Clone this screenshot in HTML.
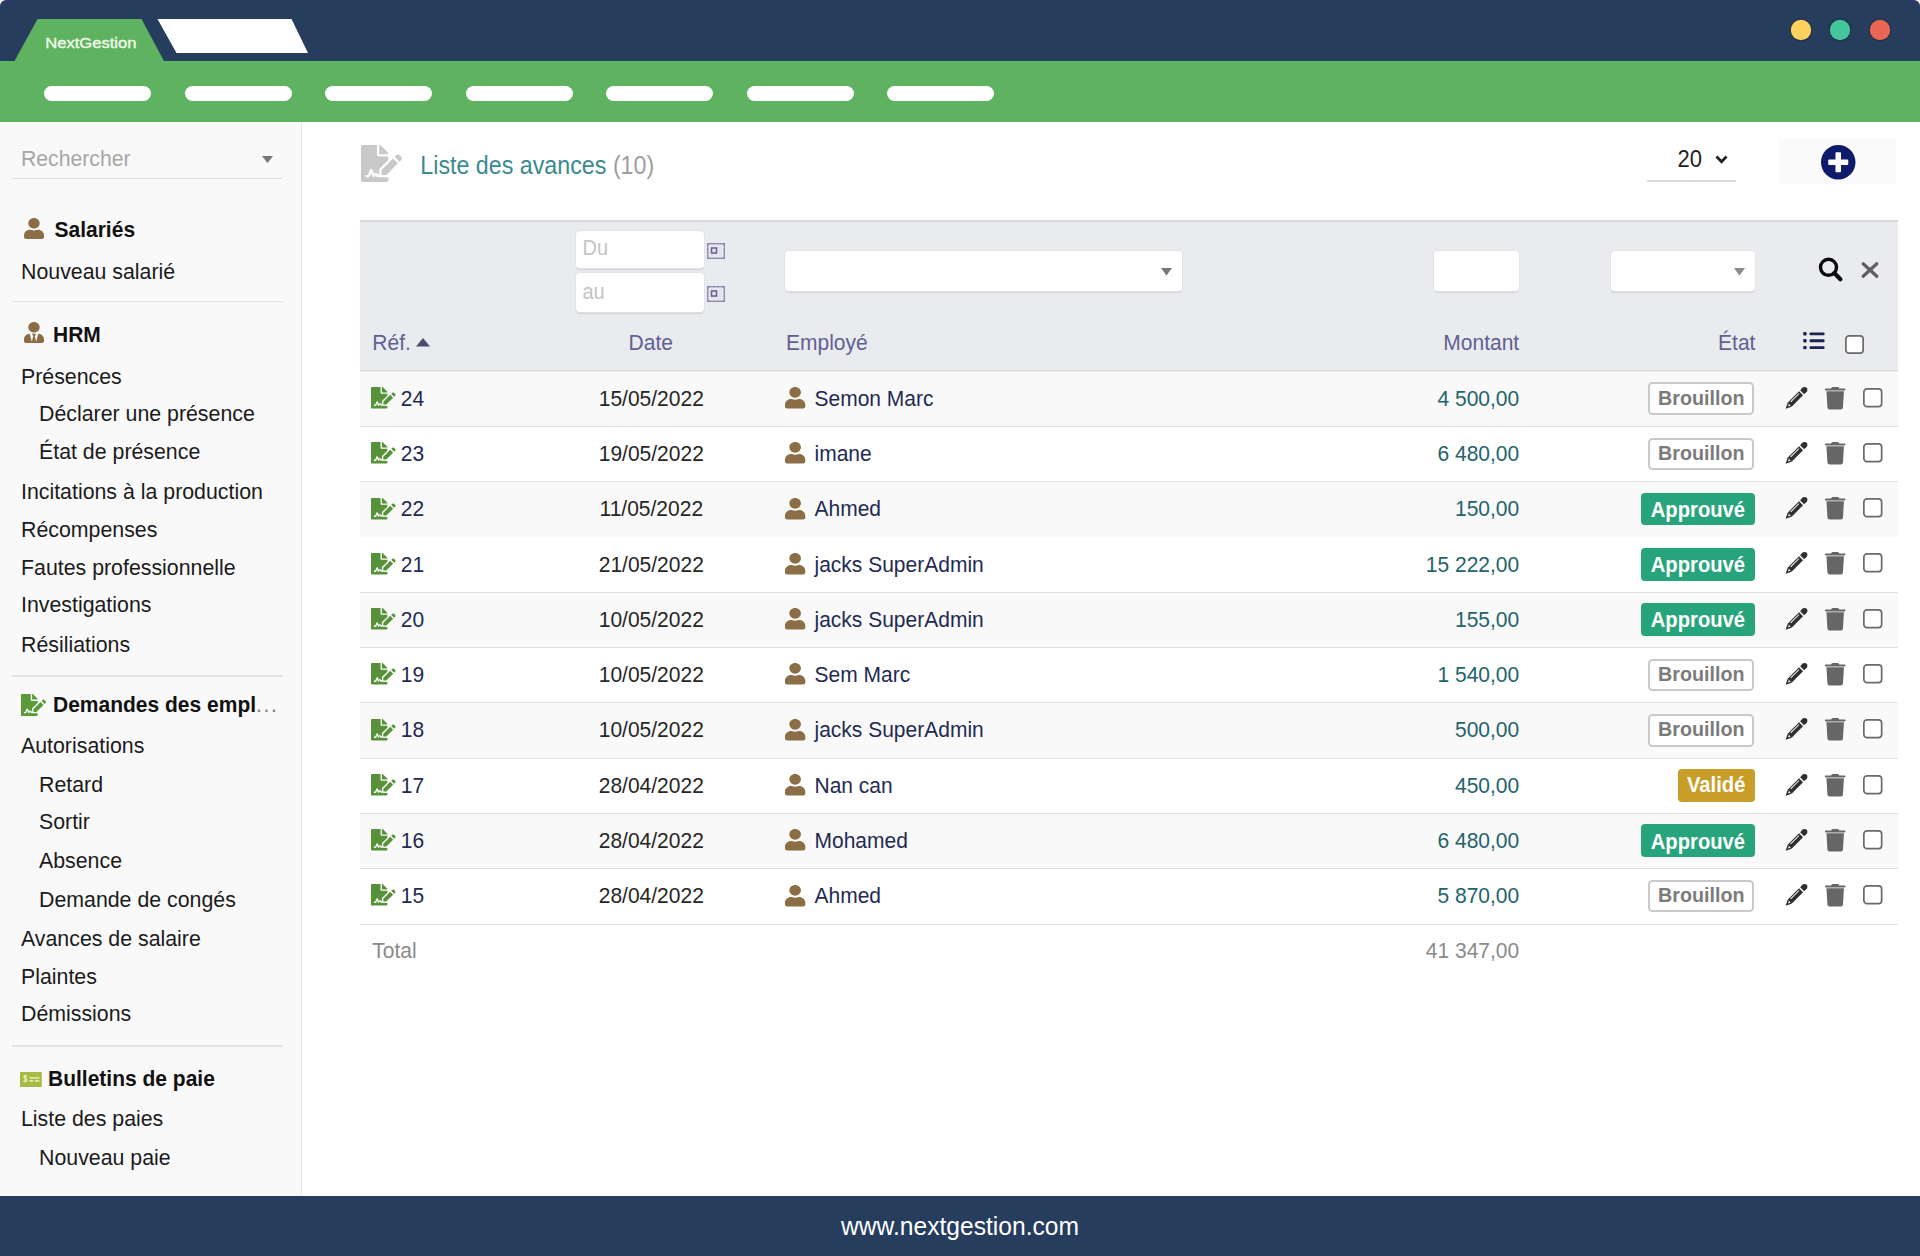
<!DOCTYPE html><html><head><meta charset="utf-8"><style>html,body{margin:0;padding:0;}
body{width:1920px;height:1256px;position:relative;overflow:hidden;background:#fff;font-family:"Liberation Sans", sans-serif;}
.t{position:absolute;white-space:nowrap;}
.i{position:absolute;overflow:visible;}
.b{position:absolute;}
.cb{position:absolute;border:2px solid #6e6e6e;border-radius:3.5px;background:#fff;}
</style></head><body>
<div class="b" style="left:0;top:0;width:1920px;height:62px;background:#263d5e;border-radius:6px 6px 0 0"></div><div class="b" style="left:0;top:61px;width:1920px;height:61px;background:#5fb260"></div><svg class="i" style="left:0;top:0;width:320px;height:62px" viewBox="0 0 320 62"><path d="M14 62 L37.5 19 H141.5 L164.5 62 Z" fill="#5fb260"/><path d="M157.5 19 H291.5 L308 53 H176.5 Z" fill="#ffffff"/></svg><div class="t" style="left:45.2px;top:34.55px;font-size:16.6px;line-height:16.6px;color:#effde9;font-weight:normal;-webkit-text-stroke:0.4px #effde9;transform:scaleY(0.92);transform-origin:0 14.05px;">NextGestion</div>
<svg class="i" style="left:1789px;top:18px;width:24px;height:24px" viewBox="0 0 24 24"><circle cx="12" cy="12" r="11.2" fill="#1b2a3f" fill-opacity="0.7"/><circle cx="12" cy="12" r="10.2" fill="#fdd15d"/></svg><svg class="i" style="left:1828px;top:18px;width:24px;height:24px" viewBox="0 0 24 24"><circle cx="12" cy="12" r="11.2" fill="#1b2a3f" fill-opacity="0.7"/><circle cx="12" cy="12" r="10.2" fill="#45c59a"/></svg><svg class="i" style="left:1868px;top:18px;width:24px;height:24px" viewBox="0 0 24 24"><circle cx="12" cy="12" r="11.2" fill="#1b2a3f" fill-opacity="0.7"/><circle cx="12" cy="12" r="10.2" fill="#ea6652"/></svg><div class="b" style="left:44.0px;top:86px;width:107px;height:15px;border-radius:8px;background:#fff"></div><div class="b" style="left:184.5px;top:86px;width:107px;height:15px;border-radius:8px;background:#fff"></div><div class="b" style="left:325.0px;top:86px;width:107px;height:15px;border-radius:8px;background:#fff"></div><div class="b" style="left:465.5px;top:86px;width:107px;height:15px;border-radius:8px;background:#fff"></div><div class="b" style="left:606.0px;top:86px;width:107px;height:15px;border-radius:8px;background:#fff"></div><div class="b" style="left:746.5px;top:86px;width:107px;height:15px;border-radius:8px;background:#fff"></div><div class="b" style="left:887.0px;top:86px;width:107px;height:15px;border-radius:8px;background:#fff"></div><div class="b" style="left:0;top:122px;width:301px;height:1074px;background:#f9f9f9;border-right:1.5px solid #e6e6e6"></div><div class="t" style="left:21px;top:147.55px;font-size:21.2px;line-height:21.2px;color:#a6a6a6;font-weight:normal;transform:scaleY(1.07);transform-origin:0 17.95px;">Rechercher</div>
<svg class="i" style="left:262px;top:156px;width:11px;height:7px" viewBox="0 0 11 7"><path d="M0 0 H11 L5.5 7 Z" fill="#777"/></svg><div class="b" style="left:12px;top:177.5px;width:270px;height:1.5px;background:#dcdcdc"></div><svg class="i" style="left:24px;top:218px;width:20px;height:21px" viewBox="0 0 448 512" preserveAspectRatio="none"><path d="M224 256c70.7 0 128-57.3 128-128S294.7 0 224 0 96 57.3 96 128s57.3 128 128 128zm89.6 32h-16.7c-22.2 10.2-46.9 16-72.9 16s-50.6-5.8-72.9-16h-16.7C60.2 288 0 348.2 0 422.4V464c0 26.5 21.5 48 48 48h352c26.5 0 48-21.5 48-48v-41.6c0-74.2-60.2-134.4-134.4-134.4z" fill="#8b6e45"/></svg><div class="t" style="left:54.5px;top:219.22px;font-size:21px;line-height:21px;color:#111;font-weight:bold;transform:scaleY(1.07);transform-origin:0 17.78px;">Salariés</div>
<div class="t" style="left:21px;top:261.64px;font-size:21.33px;line-height:21.33px;color:#1b1b1b;font-weight:normal;transform:scaleY(1.07);transform-origin:0 18.06px;">Nouveau salarié</div>
<div class="b" style="left:12px;top:300.5px;width:271px;height:1.5px;background:#e2e2e2"></div><svg class="i" style="left:24px;top:322px;width:20px;height:21px" viewBox="0 0 448 512" preserveAspectRatio="none"><path d="M224 256c70.7 0 128-57.3 128-128S294.7 0 224 0 96 57.3 96 128s57.3 128 128 128zm95.8 32.6L272 480l-32-136 32-56h-96l32 56-32 136-47.8-191.4C56.9 292 0 350.3 0 422.4V464c0 26.5 21.5 48 48 48h352c26.5 0 48-21.5 48-48v-41.6c0-72.1-56.9-130.4-128.2-133.8z" fill="#8b6e45"/></svg><div class="t" style="left:53px;top:323.62px;font-size:21px;line-height:21px;color:#111;font-weight:bold;transform:scaleY(1.07);transform-origin:0 17.78px;">HRM</div>
<div class="t" style="left:21px;top:366.64px;font-size:21.33px;line-height:21.33px;color:#1b1b1b;font-weight:normal;transform:scaleY(1.07);transform-origin:0 18.06px;">Présences</div>
<div class="t" style="left:39px;top:404.24px;font-size:21.33px;line-height:21.33px;color:#1b1b1b;font-weight:normal;transform:scaleY(1.07);transform-origin:0 18.06px;">Déclarer une présence</div>
<div class="t" style="left:39px;top:442.44px;font-size:21.33px;line-height:21.33px;color:#1b1b1b;font-weight:normal;transform:scaleY(1.07);transform-origin:0 18.06px;">État de présence</div>
<div class="t" style="left:21px;top:482.24px;font-size:21.33px;line-height:21.33px;color:#1b1b1b;font-weight:normal;transform:scaleY(1.07);transform-origin:0 18.06px;">Incitations à la production</div>
<div class="t" style="left:21px;top:519.54px;font-size:21.33px;line-height:21.33px;color:#1b1b1b;font-weight:normal;transform:scaleY(1.07);transform-origin:0 18.06px;">Récompenses</div>
<div class="t" style="left:21px;top:557.74px;font-size:21.33px;line-height:21.33px;color:#1b1b1b;font-weight:normal;transform:scaleY(1.07);transform-origin:0 18.06px;">Fautes professionnelle</div>
<div class="t" style="left:21px;top:595.24px;font-size:21.33px;line-height:21.33px;color:#1b1b1b;font-weight:normal;transform:scaleY(1.07);transform-origin:0 18.06px;">Investigations</div>
<div class="t" style="left:21px;top:634.54px;font-size:21.33px;line-height:21.33px;color:#1b1b1b;font-weight:normal;transform:scaleY(1.07);transform-origin:0 18.06px;">Résiliations</div>
<div class="b" style="left:12px;top:675px;width:271px;height:1.5px;background:#e2e2e2"></div><svg class="i" style="left:21px;top:694px;width:25px;height:22px" viewBox="0 0 576 512" preserveAspectRatio="none"><path d="M218.17 424.14c-2.95-5.92-8.09-6.52-10.17-6.52s-7.22.59-10.020 6.19l-7.67 15.34c-6.37 12.78-25.03 11.37-29.48-2.09L144 386.59l-10.61 31.88c-5.89 17.66-22.380 29.53-41 29.53H80c-8.84 0-16-7.16-16-16s7.16-16 16-16h12.39c4.83 0 9.11-3.08 10.64-7.66l18.19-54.64c3.3-9.81 12.44-16.41 22.78-16.41s19.48 6.59 22.77 16.41l13.88 41.64c19.75-16.19 54.06-9.7 66 14.16 1.89 3.78 5.49 5.95 9.36 6.26v-82.12l128-127.09V160H248c-13.2 0-24-10.8-24-24V0H24C10.7 0 0 10.7 0 24v464c0 13.3 10.7 24 24 24h336c13.3 0 24-10.7 24-24v-40l-128-.53c-24.17-.12-45.92-13.79-57.83-37.33zM384 121.9c0-6.3-2.5-12.4-7-16.9L279.1 7c-4.5-4.5-10.6-7-17-7H256v128h128v-6.1zm-96 225.06V416h68.99l161.68-162.78-67.88-67.88L288 346.96zm280.54-179.63l-31.87-31.87c-9.94-9.94-26.07-9.94-36.01 0l-27.25 27.25 67.88 67.88 27.25-27.25c9.95-9.94 9.95-26.07 0-36.01z" fill="#5b9a3a"/></svg><div class="t" style="left:53px;top:694.02px;font-size:21px;line-height:21px;color:#111;font-weight:bold;transform:scaleY(1.07);transform-origin:0 17.78px;">Demandes des empl<span style="letter-spacing:1.6px;color:#7d7d7d;font-weight:normal">...</span></div>
<div class="t" style="left:21px;top:735.84px;font-size:21.33px;line-height:21.33px;color:#1b1b1b;font-weight:normal;transform:scaleY(1.07);transform-origin:0 18.06px;">Autorisations</div>
<div class="t" style="left:39px;top:775.24px;font-size:21.33px;line-height:21.33px;color:#1b1b1b;font-weight:normal;transform:scaleY(1.07);transform-origin:0 18.06px;">Retard</div>
<div class="t" style="left:39px;top:812.24px;font-size:21.33px;line-height:21.33px;color:#1b1b1b;font-weight:normal;transform:scaleY(1.07);transform-origin:0 18.06px;">Sortir</div>
<div class="t" style="left:39px;top:851.24px;font-size:21.33px;line-height:21.33px;color:#1b1b1b;font-weight:normal;transform:scaleY(1.07);transform-origin:0 18.06px;">Absence</div>
<div class="t" style="left:39px;top:890.14px;font-size:21.33px;line-height:21.33px;color:#1b1b1b;font-weight:normal;transform:scaleY(1.07);transform-origin:0 18.06px;">Demande de congés</div>
<div class="t" style="left:21px;top:928.54px;font-size:21.33px;line-height:21.33px;color:#1b1b1b;font-weight:normal;transform:scaleY(1.07);transform-origin:0 18.06px;">Avances de salaire</div>
<div class="t" style="left:21px;top:966.64px;font-size:21.33px;line-height:21.33px;color:#1b1b1b;font-weight:normal;transform:scaleY(1.07);transform-origin:0 18.06px;">Plaintes</div>
<div class="t" style="left:21px;top:1004.24px;font-size:21.33px;line-height:21.33px;color:#1b1b1b;font-weight:normal;transform:scaleY(1.07);transform-origin:0 18.06px;">Démissions</div>
<div class="b" style="left:12px;top:1045px;width:271px;height:1.5px;background:#e2e2e2"></div><svg class="i" style="left:20.2px;top:1071.8px;width:21.8px;height:15.2px" viewBox="0 0 22 15.2"><rect x="0" y="0" width="22" height="15.2" rx="0.6" fill="#a8ba45"/><path d="M7 4.6 Q6.5 3.7 5.3 3.7 Q3.9 3.7 3.9 5 Q3.9 6.1 5.4 6.5 Q6.9 6.9 6.9 8.1 Q6.9 9.5 5.3 9.5 Q4.1 9.5 3.6 8.6 M5.35 2.6 V10.6" stroke="#e4ecb0" stroke-width="1.3" fill="none"/><path d="M9.6 5.9 H19.6" stroke="#e6eda6" stroke-width="1.6"/><path d="M9.6 8.9 H13.4 M15.2 8.9 H19.6" stroke="#e6eda6" stroke-width="1.6"/></svg><div class="t" style="left:48px;top:1067.62px;font-size:21px;line-height:21px;color:#111;font-weight:bold;transform:scaleY(1.07);transform-origin:0 17.78px;">Bulletins de paie</div>
<div class="t" style="left:21px;top:1108.64px;font-size:21.33px;line-height:21.33px;color:#1b1b1b;font-weight:normal;transform:scaleY(1.07);transform-origin:0 18.06px;">Liste des paies</div>
<div class="t" style="left:39px;top:1148.24px;font-size:21.33px;line-height:21.33px;color:#1b1b1b;font-weight:normal;transform:scaleY(1.07);transform-origin:0 18.06px;">Nouveau paie</div>
<div class="b" style="left:0;top:1196px;width:1920px;height:60px;background:#263d5e"></div><div class="t" style="left:660px;width:600px;top:1214.68px;font-size:24.6px;line-height:24.6px;color:#fff;font-weight:normal;text-align:center;transform:scaleY(1.07);transform-origin:0 20.82px;">www.nextgestion.com</div>
<svg class="i" style="left:361px;top:145px;width:41px;height:37px" viewBox="0 0 576 512" preserveAspectRatio="none"><path d="M218.17 424.14c-2.95-5.92-8.09-6.52-10.17-6.52s-7.22.59-10.020 6.19l-7.67 15.34c-6.37 12.78-25.03 11.37-29.48-2.09L144 386.59l-10.61 31.88c-5.89 17.66-22.380 29.53-41 29.53H80c-8.84 0-16-7.16-16-16s7.16-16 16-16h12.39c4.83 0 9.11-3.08 10.64-7.66l18.19-54.64c3.3-9.81 12.44-16.41 22.78-16.41s19.48 6.59 22.77 16.41l13.88 41.64c19.75-16.19 54.06-9.7 66 14.16 1.89 3.78 5.49 5.95 9.36 6.26v-82.12l128-127.09V160H248c-13.2 0-24-10.8-24-24V0H24C10.7 0 0 10.7 0 24v464c0 13.3 10.7 24 24 24h336c13.3 0 24-10.7 24-24v-40l-128-.53c-24.17-.12-45.92-13.79-57.83-37.33zM384 121.9c0-6.3-2.5-12.4-7-16.9L279.1 7c-4.5-4.5-10.6-7-17-7H256v128h128v-6.1zm-96 225.06V416h68.99l161.68-162.78-67.88-67.88L288 346.96zm280.54-179.63l-31.87-31.87c-9.94-9.94-26.07-9.94-36.01 0l-27.25 27.25 67.88 67.88 27.25-27.25c9.95-9.94 9.95-26.07 0-36.01z" fill="#c9c9c9"/></svg><div class="t" style="left:420.3px;top:154.92px;font-size:23.25px;line-height:23.25px;color:#3a8a90;font-weight:normal;transform:scaleY(1.07);transform-origin:0 19.68px;">Liste des avances <span style="color:#9d9d9d">(10)</span></div>
<div class="t" style="left:1677.6px;top:148.78px;font-size:22px;line-height:22px;color:#222;font-weight:normal;transform:scaleY(1.07);transform-origin:0 18.62px;">20</div>
<svg class="i" style="left:1715px;top:154.5px;width:13px;height:9px" viewBox="0 0 13 9"><path d="M1.5 1.5 L6.5 6.8 L11.5 1.5" stroke="#222" stroke-width="2.8" fill="none"/></svg><div class="b" style="left:1646.5px;top:180.3px;width:89px;height:2px;background:#dcdcdc"></div><div class="b" style="left:1779px;top:139px;width:117px;height:45px;background:#fafafa"></div><svg class="i" style="left:1820.5px;top:144.8px;width:34.5px;height:34.5px" viewBox="8 8 496 496"><circle cx="256" cy="256" r="200" fill="#fff"/><path d="M256 8C119 8 8 119 8 256s111 248 248 248 248-111 248-248S393 8 256 8zm144 276c0 6.6-5.4 12-12 12h-92v92c0 6.6-5.4 12-12 12h-56c-6.6 0-12-5.4-12-12v-92h-92c-6.6 0-12-5.4-12-12v-56c0-6.6 5.4-12 12-12h92v-92c0-6.6 5.4-12 12-12h56c6.6 0 12 5.4 12 12v92h92c6.6 0 12 5.4 12 12v56z" fill="#0e1b6b"/></svg><div class="b" style="left:360px;top:220px;width:1538px;height:150.5px;background:#e9ebee;border-top:2.4px solid #d6d7da"></div><div class="b" style="left:576px;top:230.7px;width:127.70000000000005px;height:37.80000000000001px;background:#fff;border-radius:4px;box-shadow:0 0 0 0.8px #e1e2e6, 0 1.2px 1.2px rgba(0,0,0,0.10)"></div><div class="b" style="left:576px;top:273.3px;width:127.70000000000005px;height:38.39999999999998px;background:#fff;border-radius:4px;box-shadow:0 0 0 0.8px #e1e2e6, 0 1.2px 1.2px rgba(0,0,0,0.10)"></div><div class="t" style="left:582.5px;top:238.47px;font-size:20px;line-height:20px;color:#c4c4c4;font-weight:normal;transform:scaleY(1.07);transform-origin:0 16.93px;">Du</div>
<div class="t" style="left:582.5px;top:282.47px;font-size:20px;line-height:20px;color:#c4c4c4;font-weight:normal;transform:scaleY(1.07);transform-origin:0 16.93px;">au</div>
<svg class="i" style="left:706.5px;top:242.5px;width:18px;height:16px" viewBox="0 0 18 16"><rect x="0.75" y="0.75" width="16.5" height="14.5" fill="none" stroke="#8a86ac" stroke-width="1.5"/><path d="M0.75 4.5 H17.25 M0.75 8 H17.25 M0.75 11.5 H17.25 M5 0.75 V15.25 M9 0.75 V15.25 M13 0.75 V15.25" stroke="#e2dcef" stroke-width="0.9"/><rect x="4.5" y="5" width="5" height="5" fill="none" stroke="#6a6390" stroke-width="1.6"/></svg><svg class="i" style="left:706.5px;top:286.0px;width:18px;height:16px" viewBox="0 0 18 16"><rect x="0.75" y="0.75" width="16.5" height="14.5" fill="none" stroke="#8a86ac" stroke-width="1.5"/><path d="M0.75 4.5 H17.25 M0.75 8 H17.25 M0.75 11.5 H17.25 M5 0.75 V15.25 M9 0.75 V15.25 M13 0.75 V15.25" stroke="#e2dcef" stroke-width="0.9"/><rect x="4.5" y="5" width="5" height="5" fill="none" stroke="#6a6390" stroke-width="1.6"/></svg><div class="b" style="left:784.7px;top:250.8px;width:397.70000000000005px;height:40.30000000000001px;background:#fff;border-radius:4px;box-shadow:0 0 0 0.8px #e1e2e6, 0 1.2px 1.2px rgba(0,0,0,0.10)"></div><svg class="i" style="left:1161px;top:268.2px;width:11px;height:7.5px" viewBox="0 0 11 7.5"><path d="M0 0 H11 L5.5 7.5 Z" fill="#777"/></svg><div class="b" style="left:1433.9px;top:251.4px;width:85.29999999999995px;height:39.20000000000002px;background:#fff;border-radius:4px;box-shadow:0 0 0 0.8px #e1e2e6, 0 1.2px 1.2px rgba(0,0,0,0.10)"></div><div class="b" style="left:1610.7px;top:251.4px;width:144.0999999999999px;height:39.20000000000002px;background:#fff;border-radius:4px;box-shadow:0 0 0 0.8px #e1e2e6, 0 1.2px 1.2px rgba(0,0,0,0.10)"></div><svg class="i" style="left:1733.7px;top:268.0px;width:11px;height:7.5px" viewBox="0 0 11 7.5"><path d="M0 0 H11 L5.5 7.5 Z" fill="#8a8a8a"/></svg><svg class="i" style="left:1816px;top:255px;width:30px;height:30px" viewBox="0 0 30 30"><circle cx="12.5" cy="12.3" r="8.0" fill="none" stroke="#0a0a0a" stroke-width="3.4"/><path d="M18.3 18.1 L24.4 24.2" stroke="#0a0a0a" stroke-width="4.2" stroke-linecap="round"/></svg><svg class="i" style="left:1860.5px;top:262px;width:18px;height:16px" viewBox="0 0 18 16"><path d="M2.2 1.8 L15.8 14.2 M15.8 1.8 L2.2 14.2" stroke="#5e5e5e" stroke-width="3.2" stroke-linecap="round"/></svg><div class="t" style="left:372.3px;top:332.22px;font-size:21px;line-height:21px;color:#5e6192;font-weight:normal;transform:scaleY(1.07);transform-origin:0 17.78px;">Réf.</div>
<svg class="i" style="left:416px;top:338px;width:14px;height:8.5px" viewBox="0 0 14 8.5"><path d="M0 8.5 H14 L7 0 Z" fill="#4a4d6e"/></svg><div class="t" style="left:350.79999999999995px;width:600px;top:332.22px;font-size:21px;line-height:21px;color:#5e6192;font-weight:normal;text-align:center;transform:scaleY(1.07);transform-origin:0 17.78px;">Date</div>
<div class="t" style="left:786px;top:332.22px;font-size:21px;line-height:21px;color:#5e6192;font-weight:normal;transform:scaleY(1.07);transform-origin:0 17.78px;">Employé</div>
<div class="t" style="right:400.79999999999995px;top:332.42px;font-size:21px;line-height:21px;color:#5e6192;font-weight:normal;text-align:right;transform:scaleY(1.07);transform-origin:0 17.78px;">Montant</div>
<div class="t" style="right:164.5999999999999px;top:332.42px;font-size:21px;line-height:21px;color:#5e6192;font-weight:normal;text-align:right;transform:scaleY(1.07);transform-origin:0 17.78px;">État</div>
<svg class="i" style="left:1802.7px;top:332.3px;width:22px;height:17.5px" viewBox="0 0 22 17.5"><rect x="0.2" y="0.1" width="3.4" height="3.4" rx="1" fill="#1d2250"/><rect x="0.2" y="7.0" width="3.4" height="3.4" rx="1" fill="#1d2250"/><rect x="0.2" y="13.9" width="3.4" height="3.4" rx="1" fill="#1d2250"/><rect x="6.6" y="0.4" width="14.9" height="2.9" rx="0.8" fill="#1d2250"/><rect x="6.6" y="7.3" width="14.9" height="2.9" rx="0.8" fill="#1d2250"/><rect x="6.6" y="14.2" width="14.9" height="2.9" rx="0.8" fill="#1d2250"/></svg><svg class="i" style="left:1845px;top:335.3px;width:19px;height:19px" viewBox="0 0 19 19"><rect x="0.85" y="0.85" width="17.3" height="17.3" rx="3.2" fill="#fff" stroke="#6a6a6a" stroke-width="1.7"/></svg><div class="b" style="left:360px;top:369.5px;width:1538px;height:1.6px;background:#dadada"></div><div class="b" style="left:360px;top:371.63px;width:1538px;height:55.27px;background:#f9f9f9;"></div><div class="b" style="left:360px;top:426.10px;width:1538px;height:1.6px;background:#e1e1e1"></div><svg class="i" style="left:371px;top:387.03px;width:24.6px;height:21.6px" viewBox="0 0 576 512" preserveAspectRatio="none"><path d="M218.17 424.14c-2.95-5.92-8.09-6.52-10.17-6.52s-7.22.59-10.020 6.19l-7.67 15.34c-6.37 12.78-25.03 11.37-29.48-2.09L144 386.59l-10.61 31.88c-5.89 17.66-22.380 29.53-41 29.53H80c-8.84 0-16-7.16-16-16s7.16-16 16-16h12.39c4.83 0 9.11-3.08 10.64-7.66l18.19-54.64c3.3-9.81 12.44-16.41 22.78-16.41s19.48 6.59 22.77 16.41l13.88 41.64c19.75-16.19 54.06-9.7 66 14.16 1.89 3.78 5.49 5.95 9.36 6.26v-82.12l128-127.09V160H248c-13.2 0-24-10.8-24-24V0H24C10.7 0 0 10.7 0 24v464c0 13.3 10.7 24 24 24h336c13.3 0 24-10.7 24-24v-40l-128-.53c-24.17-.12-45.92-13.79-57.83-37.33zM384 121.9c0-6.3-2.5-12.4-7-16.9L279.1 7c-4.5-4.5-10.6-7-17-7H256v128h128v-6.1zm-96 225.06V416h68.99l161.68-162.78-67.88-67.88L288 346.96zm280.54-179.63l-31.87-31.87c-9.94-9.94-26.07-9.94-36.01 0l-27.25 27.25 67.88 67.88 27.25-27.25c9.95-9.94 9.95-26.07 0-36.01z" fill="#57923a"/></svg><div class="t" style="left:400.8px;top:387.72px;font-size:21px;line-height:21px;color:#1e2a52;font-weight:normal;transform:scaleY(1.07);transform-origin:0 17.78px;">24</div>
<div class="t" style="left:351.29999999999995px;width:600px;top:387.72px;font-size:21px;line-height:21px;color:#262626;font-weight:normal;text-align:center;transform:scaleY(1.07);transform-origin:0 17.78px;">15/05/2022</div>
<svg class="i" style="left:785px;top:387.13px;width:20.3px;height:21.4px" viewBox="0 0 448 512" preserveAspectRatio="none"><path d="M224 256c70.7 0 128-57.3 128-128S294.7 0 224 0 96 57.3 96 128s57.3 128 128 128zm89.6 32h-16.7c-22.2 10.2-46.9 16-72.9 16s-50.6-5.8-72.9-16h-16.7C60.2 288 0 348.2 0 422.4V464c0 26.5 21.5 48 48 48h352c26.5 0 48-21.5 48-48v-41.6c0-74.2-60.2-134.4-134.4-134.4z" fill="#8b6e45"/></svg><div class="t" style="left:814.5px;top:387.72px;font-size:21px;line-height:21px;color:#1e2a52;font-weight:normal;transform:scaleY(1.07);transform-origin:0 17.78px;">Semon Marc</div>
<div class="t" style="right:400.79999999999995px;top:387.72px;font-size:21px;line-height:21px;color:#23636b;font-weight:normal;text-align:right;transform:scaleY(1.07);transform-origin:0 17.78px;">4 500,00</div>
<div class="b" style="left:1647.8px;top:382.33px;width:102.2px;height:28.7px;border:2px solid #c9c9c9;border-radius:4.5px;background:#fff"></div><div class="t" style="left:1401.3px;width:600px;top:388.82px;font-size:19.7px;line-height:19.7px;color:#7b7b7b;font-weight:bold;text-align:center;transform:scaleY(1.07);transform-origin:0 16.68px;">Brouillon</div>
<svg class="i" style="left:1784.6px;top:386.63px;width:22.2px;height:22.5px" viewBox="0 0 22 22"><path d="M4.6 17.4 L15.9 6.1" stroke="#2f2f2f" stroke-width="5.6"/><path d="M6.58 19.38 L2.62 15.42 L0.6 21.4 Z" fill="#2f2f2f"/><path d="M17.0 5.0 L19.6 2.4" stroke="#2f2f2f" stroke-width="5.6"/><circle cx="19.4" cy="2.6" r="2.8" fill="#2f2f2f"/><path d="M5.4 18.1 L3.9 16.6 L2.9 19.1 Z" fill="#fff"/><path d="M5.6 14.6 L13.9 6.3" stroke="#fff" stroke-width="1.0"/></svg><svg class="i" style="left:1825.2px;top:386.63px;width:20.4px;height:22.5px" viewBox="0 0 448 512" preserveAspectRatio="none"><path d="M432 32H312l-9.4-18.7A24 24 0 0 0 281.1 0H166.8a23.720 23.720 0 0 0-21.4 13.3L136 32H16A16 16 0 0 0 0 48v16a16 16 0 0 0 16 16h416a16 16 0 0 0 16-16V48a16 16 0 0 0-16-16zM53.2 467a48 48 0 0 0 47.9 45h245.8a48 48 0 0 0 47.9-45L416 96H32z" fill="#666"/></svg><svg class="i" style="left:1863.2px;top:387.63px;width:19.5px;height:19.5px" viewBox="0 0 19.5 19.5"><rect x="0.85" y="0.85" width="17.8" height="17.8" rx="3.2" fill="#fff" stroke="#6a6a6a" stroke-width="1.7"/></svg><div class="b" style="left:360px;top:426.90px;width:1538px;height:55.27px;background:#ffffff;"></div><div class="b" style="left:360px;top:481.37px;width:1538px;height:1.6px;background:#e1e1e1"></div><svg class="i" style="left:371px;top:442.29999999999995px;width:24.6px;height:21.6px" viewBox="0 0 576 512" preserveAspectRatio="none"><path d="M218.17 424.14c-2.95-5.92-8.09-6.52-10.17-6.52s-7.22.59-10.020 6.19l-7.67 15.34c-6.37 12.78-25.03 11.37-29.48-2.09L144 386.59l-10.61 31.88c-5.89 17.66-22.380 29.53-41 29.53H80c-8.84 0-16-7.16-16-16s7.16-16 16-16h12.39c4.83 0 9.11-3.08 10.64-7.66l18.19-54.64c3.3-9.81 12.44-16.41 22.78-16.41s19.48 6.59 22.77 16.41l13.88 41.64c19.75-16.19 54.06-9.7 66 14.16 1.89 3.78 5.49 5.95 9.36 6.26v-82.12l128-127.09V160H248c-13.2 0-24-10.8-24-24V0H24C10.7 0 0 10.7 0 24v464c0 13.3 10.7 24 24 24h336c13.3 0 24-10.7 24-24v-40l-128-.53c-24.17-.12-45.92-13.79-57.83-37.33zM384 121.9c0-6.3-2.5-12.4-7-16.9L279.1 7c-4.5-4.5-10.6-7-17-7H256v128h128v-6.1zm-96 225.06V416h68.99l161.68-162.78-67.88-67.88L288 346.96zm280.54-179.63l-31.87-31.87c-9.94-9.94-26.07-9.94-36.01 0l-27.25 27.25 67.88 67.88 27.25-27.25c9.95-9.94 9.95-26.07 0-36.01z" fill="#57923a"/></svg><div class="t" style="left:400.8px;top:442.99px;font-size:21px;line-height:21px;color:#1e2a52;font-weight:normal;transform:scaleY(1.07);transform-origin:0 17.78px;">23</div>
<div class="t" style="left:351.29999999999995px;width:600px;top:442.99px;font-size:21px;line-height:21px;color:#262626;font-weight:normal;text-align:center;transform:scaleY(1.07);transform-origin:0 17.78px;">19/05/2022</div>
<svg class="i" style="left:785px;top:442.4px;width:20.3px;height:21.4px" viewBox="0 0 448 512" preserveAspectRatio="none"><path d="M224 256c70.7 0 128-57.3 128-128S294.7 0 224 0 96 57.3 96 128s57.3 128 128 128zm89.6 32h-16.7c-22.2 10.2-46.9 16-72.9 16s-50.6-5.8-72.9-16h-16.7C60.2 288 0 348.2 0 422.4V464c0 26.5 21.5 48 48 48h352c26.5 0 48-21.5 48-48v-41.6c0-74.2-60.2-134.4-134.4-134.4z" fill="#8b6e45"/></svg><div class="t" style="left:814.5px;top:442.99px;font-size:21px;line-height:21px;color:#1e2a52;font-weight:normal;transform:scaleY(1.07);transform-origin:0 17.78px;">imane</div>
<div class="t" style="right:400.79999999999995px;top:442.99px;font-size:21px;line-height:21px;color:#23636b;font-weight:normal;text-align:right;transform:scaleY(1.07);transform-origin:0 17.78px;">6 480,00</div>
<div class="b" style="left:1647.8px;top:437.60px;width:102.2px;height:28.7px;border:2px solid #c9c9c9;border-radius:4.5px;background:#fff"></div><div class="t" style="left:1401.3px;width:600px;top:444.09px;font-size:19.7px;line-height:19.7px;color:#7b7b7b;font-weight:bold;text-align:center;transform:scaleY(1.07);transform-origin:0 16.68px;">Brouillon</div>
<svg class="i" style="left:1784.6px;top:441.9px;width:22.2px;height:22.5px" viewBox="0 0 22 22"><path d="M4.6 17.4 L15.9 6.1" stroke="#2f2f2f" stroke-width="5.6"/><path d="M6.58 19.38 L2.62 15.42 L0.6 21.4 Z" fill="#2f2f2f"/><path d="M17.0 5.0 L19.6 2.4" stroke="#2f2f2f" stroke-width="5.6"/><circle cx="19.4" cy="2.6" r="2.8" fill="#2f2f2f"/><path d="M5.4 18.1 L3.9 16.6 L2.9 19.1 Z" fill="#fff"/><path d="M5.6 14.6 L13.9 6.3" stroke="#fff" stroke-width="1.0"/></svg><svg class="i" style="left:1825.2px;top:441.9px;width:20.4px;height:22.5px" viewBox="0 0 448 512" preserveAspectRatio="none"><path d="M432 32H312l-9.4-18.7A24 24 0 0 0 281.1 0H166.8a23.720 23.720 0 0 0-21.4 13.3L136 32H16A16 16 0 0 0 0 48v16a16 16 0 0 0 16 16h416a16 16 0 0 0 16-16V48a16 16 0 0 0-16-16zM53.2 467a48 48 0 0 0 47.9 45h245.8a48 48 0 0 0 47.9-45L416 96H32z" fill="#666"/></svg><svg class="i" style="left:1863.2px;top:442.9px;width:19.5px;height:19.5px" viewBox="0 0 19.5 19.5"><rect x="0.85" y="0.85" width="17.8" height="17.8" rx="3.2" fill="#fff" stroke="#6a6a6a" stroke-width="1.7"/></svg><div class="b" style="left:360px;top:482.17px;width:1538px;height:55.27px;background:#f9f9f9;"></div><div class="b" style="left:360px;top:536.64px;width:1538px;height:1.6px;background:#e1e1e1"></div><svg class="i" style="left:371px;top:497.57px;width:24.6px;height:21.6px" viewBox="0 0 576 512" preserveAspectRatio="none"><path d="M218.17 424.14c-2.95-5.92-8.09-6.52-10.17-6.52s-7.22.59-10.020 6.19l-7.67 15.34c-6.37 12.78-25.03 11.37-29.48-2.09L144 386.59l-10.61 31.88c-5.89 17.66-22.380 29.53-41 29.53H80c-8.84 0-16-7.16-16-16s7.16-16 16-16h12.39c4.83 0 9.11-3.08 10.64-7.66l18.19-54.64c3.3-9.81 12.44-16.41 22.78-16.41s19.48 6.59 22.77 16.41l13.88 41.64c19.75-16.19 54.06-9.7 66 14.16 1.89 3.78 5.49 5.95 9.36 6.26v-82.12l128-127.09V160H248c-13.2 0-24-10.8-24-24V0H24C10.7 0 0 10.7 0 24v464c0 13.3 10.7 24 24 24h336c13.3 0 24-10.7 24-24v-40l-128-.53c-24.17-.12-45.92-13.79-57.83-37.33zM384 121.9c0-6.3-2.5-12.4-7-16.9L279.1 7c-4.5-4.5-10.6-7-17-7H256v128h128v-6.1zm-96 225.06V416h68.99l161.68-162.78-67.88-67.88L288 346.96zm280.54-179.63l-31.87-31.87c-9.94-9.94-26.07-9.94-36.01 0l-27.25 27.25 67.88 67.88 27.25-27.25c9.95-9.94 9.95-26.07 0-36.01z" fill="#57923a"/></svg><div class="t" style="left:400.8px;top:498.26px;font-size:21px;line-height:21px;color:#1e2a52;font-weight:normal;transform:scaleY(1.07);transform-origin:0 17.78px;">22</div>
<div class="t" style="left:351.29999999999995px;width:600px;top:498.26px;font-size:21px;line-height:21px;color:#262626;font-weight:normal;text-align:center;transform:scaleY(1.07);transform-origin:0 17.78px;">11/05/2022</div>
<svg class="i" style="left:785px;top:497.67px;width:20.3px;height:21.4px" viewBox="0 0 448 512" preserveAspectRatio="none"><path d="M224 256c70.7 0 128-57.3 128-128S294.7 0 224 0 96 57.3 96 128s57.3 128 128 128zm89.6 32h-16.7c-22.2 10.2-46.9 16-72.9 16s-50.6-5.8-72.9-16h-16.7C60.2 288 0 348.2 0 422.4V464c0 26.5 21.5 48 48 48h352c26.5 0 48-21.5 48-48v-41.6c0-74.2-60.2-134.4-134.4-134.4z" fill="#8b6e45"/></svg><div class="t" style="left:814.5px;top:498.26px;font-size:21px;line-height:21px;color:#1e2a52;font-weight:normal;transform:scaleY(1.07);transform-origin:0 17.78px;">Ahmed</div>
<div class="t" style="right:400.79999999999995px;top:498.26px;font-size:21px;line-height:21px;color:#23636b;font-weight:normal;text-align:right;transform:scaleY(1.07);transform-origin:0 17.78px;">150,00</div>
<div class="b" style="left:1641px;top:492.87px;width:113.8px;height:32.5px;border-radius:4px;background:#27a47b"></div><div class="t" style="left:1397.9px;width:600px;top:499.94px;font-size:20.2px;line-height:20.2px;color:#fff;font-weight:bold;text-align:center;transform:scaleY(1.07);transform-origin:0 17.10px;">Approuvé</div>
<svg class="i" style="left:1784.6px;top:497.17px;width:22.2px;height:22.5px" viewBox="0 0 22 22"><path d="M4.6 17.4 L15.9 6.1" stroke="#2f2f2f" stroke-width="5.6"/><path d="M6.58 19.38 L2.62 15.42 L0.6 21.4 Z" fill="#2f2f2f"/><path d="M17.0 5.0 L19.6 2.4" stroke="#2f2f2f" stroke-width="5.6"/><circle cx="19.4" cy="2.6" r="2.8" fill="#2f2f2f"/><path d="M5.4 18.1 L3.9 16.6 L2.9 19.1 Z" fill="#fff"/><path d="M5.6 14.6 L13.9 6.3" stroke="#fff" stroke-width="1.0"/></svg><svg class="i" style="left:1825.2px;top:497.17px;width:20.4px;height:22.5px" viewBox="0 0 448 512" preserveAspectRatio="none"><path d="M432 32H312l-9.4-18.7A24 24 0 0 0 281.1 0H166.8a23.720 23.720 0 0 0-21.4 13.3L136 32H16A16 16 0 0 0 0 48v16a16 16 0 0 0 16 16h416a16 16 0 0 0 16-16V48a16 16 0 0 0-16-16zM53.2 467a48 48 0 0 0 47.9 45h245.8a48 48 0 0 0 47.9-45L416 96H32z" fill="#666"/></svg><svg class="i" style="left:1863.2px;top:498.17px;width:19.5px;height:19.5px" viewBox="0 0 19.5 19.5"><rect x="0.85" y="0.85" width="17.8" height="17.8" rx="3.2" fill="#fff" stroke="#6a6a6a" stroke-width="1.7"/></svg><div class="b" style="left:360px;top:537.44px;width:1538px;height:55.27px;background:#ffffff;"></div><div class="b" style="left:360px;top:591.91px;width:1538px;height:1.6px;background:#e1e1e1"></div><svg class="i" style="left:371px;top:552.84px;width:24.6px;height:21.6px" viewBox="0 0 576 512" preserveAspectRatio="none"><path d="M218.17 424.14c-2.95-5.92-8.09-6.52-10.17-6.52s-7.22.59-10.020 6.19l-7.67 15.34c-6.37 12.78-25.03 11.37-29.48-2.09L144 386.59l-10.61 31.88c-5.89 17.66-22.380 29.53-41 29.53H80c-8.84 0-16-7.16-16-16s7.16-16 16-16h12.39c4.83 0 9.11-3.08 10.64-7.66l18.19-54.64c3.3-9.81 12.44-16.41 22.78-16.41s19.48 6.59 22.77 16.41l13.88 41.64c19.75-16.19 54.06-9.7 66 14.16 1.89 3.78 5.49 5.95 9.36 6.26v-82.12l128-127.09V160H248c-13.2 0-24-10.8-24-24V0H24C10.7 0 0 10.7 0 24v464c0 13.3 10.7 24 24 24h336c13.3 0 24-10.7 24-24v-40l-128-.53c-24.17-.12-45.92-13.79-57.83-37.33zM384 121.9c0-6.3-2.5-12.4-7-16.9L279.1 7c-4.5-4.5-10.6-7-17-7H256v128h128v-6.1zm-96 225.06V416h68.99l161.68-162.78-67.88-67.88L288 346.96zm280.54-179.63l-31.87-31.87c-9.94-9.94-26.07-9.94-36.01 0l-27.25 27.25 67.88 67.88 27.25-27.25c9.95-9.94 9.95-26.07 0-36.01z" fill="#57923a"/></svg><div class="t" style="left:400.8px;top:553.53px;font-size:21px;line-height:21px;color:#1e2a52;font-weight:normal;transform:scaleY(1.07);transform-origin:0 17.78px;">21</div>
<div class="t" style="left:351.29999999999995px;width:600px;top:553.53px;font-size:21px;line-height:21px;color:#262626;font-weight:normal;text-align:center;transform:scaleY(1.07);transform-origin:0 17.78px;">21/05/2022</div>
<svg class="i" style="left:785px;top:552.94px;width:20.3px;height:21.4px" viewBox="0 0 448 512" preserveAspectRatio="none"><path d="M224 256c70.7 0 128-57.3 128-128S294.7 0 224 0 96 57.3 96 128s57.3 128 128 128zm89.6 32h-16.7c-22.2 10.2-46.9 16-72.9 16s-50.6-5.8-72.9-16h-16.7C60.2 288 0 348.2 0 422.4V464c0 26.5 21.5 48 48 48h352c26.5 0 48-21.5 48-48v-41.6c0-74.2-60.2-134.4-134.4-134.4z" fill="#8b6e45"/></svg><div class="t" style="left:814.5px;top:553.53px;font-size:21px;line-height:21px;color:#1e2a52;font-weight:normal;transform:scaleY(1.07);transform-origin:0 17.78px;">jacks SuperAdmin</div>
<div class="t" style="right:400.79999999999995px;top:553.53px;font-size:21px;line-height:21px;color:#23636b;font-weight:normal;text-align:right;transform:scaleY(1.07);transform-origin:0 17.78px;">15 222,00</div>
<div class="b" style="left:1641px;top:548.14px;width:113.8px;height:32.5px;border-radius:4px;background:#27a47b"></div><div class="t" style="left:1397.9px;width:600px;top:555.21px;font-size:20.2px;line-height:20.2px;color:#fff;font-weight:bold;text-align:center;transform:scaleY(1.07);transform-origin:0 17.10px;">Approuvé</div>
<svg class="i" style="left:1784.6px;top:552.44px;width:22.2px;height:22.5px" viewBox="0 0 22 22"><path d="M4.6 17.4 L15.9 6.1" stroke="#2f2f2f" stroke-width="5.6"/><path d="M6.58 19.38 L2.62 15.42 L0.6 21.4 Z" fill="#2f2f2f"/><path d="M17.0 5.0 L19.6 2.4" stroke="#2f2f2f" stroke-width="5.6"/><circle cx="19.4" cy="2.6" r="2.8" fill="#2f2f2f"/><path d="M5.4 18.1 L3.9 16.6 L2.9 19.1 Z" fill="#fff"/><path d="M5.6 14.6 L13.9 6.3" stroke="#fff" stroke-width="1.0"/></svg><svg class="i" style="left:1825.2px;top:552.44px;width:20.4px;height:22.5px" viewBox="0 0 448 512" preserveAspectRatio="none"><path d="M432 32H312l-9.4-18.7A24 24 0 0 0 281.1 0H166.8a23.720 23.720 0 0 0-21.4 13.3L136 32H16A16 16 0 0 0 0 48v16a16 16 0 0 0 16 16h416a16 16 0 0 0 16-16V48a16 16 0 0 0-16-16zM53.2 467a48 48 0 0 0 47.9 45h245.8a48 48 0 0 0 47.9-45L416 96H32z" fill="#666"/></svg><svg class="i" style="left:1863.2px;top:553.44px;width:19.5px;height:19.5px" viewBox="0 0 19.5 19.5"><rect x="0.85" y="0.85" width="17.8" height="17.8" rx="3.2" fill="#fff" stroke="#6a6a6a" stroke-width="1.7"/></svg><div class="b" style="left:360px;top:592.71px;width:1538px;height:55.27px;background:#f9f9f9;"></div><div class="b" style="left:360px;top:647.18px;width:1538px;height:1.6px;background:#e1e1e1"></div><svg class="i" style="left:371px;top:608.11px;width:24.6px;height:21.6px" viewBox="0 0 576 512" preserveAspectRatio="none"><path d="M218.17 424.14c-2.95-5.92-8.09-6.52-10.17-6.52s-7.22.59-10.020 6.19l-7.67 15.34c-6.37 12.78-25.03 11.37-29.48-2.09L144 386.59l-10.61 31.88c-5.89 17.66-22.380 29.53-41 29.53H80c-8.84 0-16-7.16-16-16s7.16-16 16-16h12.39c4.83 0 9.11-3.08 10.64-7.66l18.19-54.64c3.3-9.81 12.44-16.41 22.78-16.41s19.48 6.59 22.77 16.41l13.88 41.64c19.75-16.19 54.06-9.7 66 14.16 1.89 3.78 5.49 5.95 9.36 6.26v-82.12l128-127.09V160H248c-13.2 0-24-10.8-24-24V0H24C10.7 0 0 10.7 0 24v464c0 13.3 10.7 24 24 24h336c13.3 0 24-10.7 24-24v-40l-128-.53c-24.17-.12-45.92-13.79-57.83-37.33zM384 121.9c0-6.3-2.5-12.4-7-16.9L279.1 7c-4.5-4.5-10.6-7-17-7H256v128h128v-6.1zm-96 225.06V416h68.99l161.68-162.78-67.88-67.88L288 346.96zm280.54-179.63l-31.87-31.87c-9.94-9.94-26.07-9.94-36.01 0l-27.25 27.25 67.88 67.88 27.25-27.25c9.95-9.94 9.95-26.07 0-36.01z" fill="#57923a"/></svg><div class="t" style="left:400.8px;top:608.80px;font-size:21px;line-height:21px;color:#1e2a52;font-weight:normal;transform:scaleY(1.07);transform-origin:0 17.78px;">20</div>
<div class="t" style="left:351.29999999999995px;width:600px;top:608.80px;font-size:21px;line-height:21px;color:#262626;font-weight:normal;text-align:center;transform:scaleY(1.07);transform-origin:0 17.78px;">10/05/2022</div>
<svg class="i" style="left:785px;top:608.21px;width:20.3px;height:21.4px" viewBox="0 0 448 512" preserveAspectRatio="none"><path d="M224 256c70.7 0 128-57.3 128-128S294.7 0 224 0 96 57.3 96 128s57.3 128 128 128zm89.6 32h-16.7c-22.2 10.2-46.9 16-72.9 16s-50.6-5.8-72.9-16h-16.7C60.2 288 0 348.2 0 422.4V464c0 26.5 21.5 48 48 48h352c26.5 0 48-21.5 48-48v-41.6c0-74.2-60.2-134.4-134.4-134.4z" fill="#8b6e45"/></svg><div class="t" style="left:814.5px;top:608.80px;font-size:21px;line-height:21px;color:#1e2a52;font-weight:normal;transform:scaleY(1.07);transform-origin:0 17.78px;">jacks SuperAdmin</div>
<div class="t" style="right:400.79999999999995px;top:608.80px;font-size:21px;line-height:21px;color:#23636b;font-weight:normal;text-align:right;transform:scaleY(1.07);transform-origin:0 17.78px;">155,00</div>
<div class="b" style="left:1641px;top:603.41px;width:113.8px;height:32.5px;border-radius:4px;background:#27a47b"></div><div class="t" style="left:1397.9px;width:600px;top:610.48px;font-size:20.2px;line-height:20.2px;color:#fff;font-weight:bold;text-align:center;transform:scaleY(1.07);transform-origin:0 17.10px;">Approuvé</div>
<svg class="i" style="left:1784.6px;top:607.71px;width:22.2px;height:22.5px" viewBox="0 0 22 22"><path d="M4.6 17.4 L15.9 6.1" stroke="#2f2f2f" stroke-width="5.6"/><path d="M6.58 19.38 L2.62 15.42 L0.6 21.4 Z" fill="#2f2f2f"/><path d="M17.0 5.0 L19.6 2.4" stroke="#2f2f2f" stroke-width="5.6"/><circle cx="19.4" cy="2.6" r="2.8" fill="#2f2f2f"/><path d="M5.4 18.1 L3.9 16.6 L2.9 19.1 Z" fill="#fff"/><path d="M5.6 14.6 L13.9 6.3" stroke="#fff" stroke-width="1.0"/></svg><svg class="i" style="left:1825.2px;top:607.71px;width:20.4px;height:22.5px" viewBox="0 0 448 512" preserveAspectRatio="none"><path d="M432 32H312l-9.4-18.7A24 24 0 0 0 281.1 0H166.8a23.720 23.720 0 0 0-21.4 13.3L136 32H16A16 16 0 0 0 0 48v16a16 16 0 0 0 16 16h416a16 16 0 0 0 16-16V48a16 16 0 0 0-16-16zM53.2 467a48 48 0 0 0 47.9 45h245.8a48 48 0 0 0 47.9-45L416 96H32z" fill="#666"/></svg><svg class="i" style="left:1863.2px;top:608.71px;width:19.5px;height:19.5px" viewBox="0 0 19.5 19.5"><rect x="0.85" y="0.85" width="17.8" height="17.8" rx="3.2" fill="#fff" stroke="#6a6a6a" stroke-width="1.7"/></svg><div class="b" style="left:360px;top:647.98px;width:1538px;height:55.27px;background:#ffffff;"></div><div class="b" style="left:360px;top:702.45px;width:1538px;height:1.6px;background:#e1e1e1"></div><svg class="i" style="left:371px;top:663.38px;width:24.6px;height:21.6px" viewBox="0 0 576 512" preserveAspectRatio="none"><path d="M218.17 424.14c-2.95-5.92-8.09-6.52-10.17-6.52s-7.22.59-10.020 6.19l-7.67 15.34c-6.37 12.78-25.03 11.37-29.48-2.09L144 386.59l-10.61 31.88c-5.89 17.66-22.380 29.53-41 29.53H80c-8.84 0-16-7.16-16-16s7.16-16 16-16h12.39c4.83 0 9.11-3.08 10.64-7.66l18.19-54.64c3.3-9.81 12.44-16.41 22.78-16.41s19.48 6.59 22.77 16.41l13.88 41.64c19.75-16.19 54.06-9.7 66 14.16 1.89 3.78 5.49 5.95 9.36 6.26v-82.12l128-127.09V160H248c-13.2 0-24-10.8-24-24V0H24C10.7 0 0 10.7 0 24v464c0 13.3 10.7 24 24 24h336c13.3 0 24-10.7 24-24v-40l-128-.53c-24.17-.12-45.92-13.79-57.83-37.33zM384 121.9c0-6.3-2.5-12.4-7-16.9L279.1 7c-4.5-4.5-10.6-7-17-7H256v128h128v-6.1zm-96 225.06V416h68.99l161.68-162.78-67.88-67.88L288 346.96zm280.54-179.63l-31.87-31.87c-9.94-9.94-26.07-9.94-36.01 0l-27.25 27.25 67.88 67.88 27.25-27.25c9.95-9.94 9.95-26.07 0-36.01z" fill="#57923a"/></svg><div class="t" style="left:400.8px;top:664.07px;font-size:21px;line-height:21px;color:#1e2a52;font-weight:normal;transform:scaleY(1.07);transform-origin:0 17.78px;">19</div>
<div class="t" style="left:351.29999999999995px;width:600px;top:664.07px;font-size:21px;line-height:21px;color:#262626;font-weight:normal;text-align:center;transform:scaleY(1.07);transform-origin:0 17.78px;">10/05/2022</div>
<svg class="i" style="left:785px;top:663.48px;width:20.3px;height:21.4px" viewBox="0 0 448 512" preserveAspectRatio="none"><path d="M224 256c70.7 0 128-57.3 128-128S294.7 0 224 0 96 57.3 96 128s57.3 128 128 128zm89.6 32h-16.7c-22.2 10.2-46.9 16-72.9 16s-50.6-5.8-72.9-16h-16.7C60.2 288 0 348.2 0 422.4V464c0 26.5 21.5 48 48 48h352c26.5 0 48-21.5 48-48v-41.6c0-74.2-60.2-134.4-134.4-134.4z" fill="#8b6e45"/></svg><div class="t" style="left:814.5px;top:664.07px;font-size:21px;line-height:21px;color:#1e2a52;font-weight:normal;transform:scaleY(1.07);transform-origin:0 17.78px;">Sem Marc</div>
<div class="t" style="right:400.79999999999995px;top:664.07px;font-size:21px;line-height:21px;color:#23636b;font-weight:normal;text-align:right;transform:scaleY(1.07);transform-origin:0 17.78px;">1 540,00</div>
<div class="b" style="left:1647.8px;top:658.68px;width:102.2px;height:28.7px;border:2px solid #c9c9c9;border-radius:4.5px;background:#fff"></div><div class="t" style="left:1401.3px;width:600px;top:665.17px;font-size:19.7px;line-height:19.7px;color:#7b7b7b;font-weight:bold;text-align:center;transform:scaleY(1.07);transform-origin:0 16.68px;">Brouillon</div>
<svg class="i" style="left:1784.6px;top:662.98px;width:22.2px;height:22.5px" viewBox="0 0 22 22"><path d="M4.6 17.4 L15.9 6.1" stroke="#2f2f2f" stroke-width="5.6"/><path d="M6.58 19.38 L2.62 15.42 L0.6 21.4 Z" fill="#2f2f2f"/><path d="M17.0 5.0 L19.6 2.4" stroke="#2f2f2f" stroke-width="5.6"/><circle cx="19.4" cy="2.6" r="2.8" fill="#2f2f2f"/><path d="M5.4 18.1 L3.9 16.6 L2.9 19.1 Z" fill="#fff"/><path d="M5.6 14.6 L13.9 6.3" stroke="#fff" stroke-width="1.0"/></svg><svg class="i" style="left:1825.2px;top:662.98px;width:20.4px;height:22.5px" viewBox="0 0 448 512" preserveAspectRatio="none"><path d="M432 32H312l-9.4-18.7A24 24 0 0 0 281.1 0H166.8a23.720 23.720 0 0 0-21.4 13.3L136 32H16A16 16 0 0 0 0 48v16a16 16 0 0 0 16 16h416a16 16 0 0 0 16-16V48a16 16 0 0 0-16-16zM53.2 467a48 48 0 0 0 47.9 45h245.8a48 48 0 0 0 47.9-45L416 96H32z" fill="#666"/></svg><svg class="i" style="left:1863.2px;top:663.98px;width:19.5px;height:19.5px" viewBox="0 0 19.5 19.5"><rect x="0.85" y="0.85" width="17.8" height="17.8" rx="3.2" fill="#fff" stroke="#6a6a6a" stroke-width="1.7"/></svg><div class="b" style="left:360px;top:703.25px;width:1538px;height:55.27px;background:#f9f9f9;"></div><div class="b" style="left:360px;top:757.72px;width:1538px;height:1.6px;background:#e1e1e1"></div><svg class="i" style="left:371px;top:718.65px;width:24.6px;height:21.6px" viewBox="0 0 576 512" preserveAspectRatio="none"><path d="M218.17 424.14c-2.95-5.92-8.09-6.52-10.17-6.52s-7.22.59-10.020 6.19l-7.67 15.34c-6.37 12.78-25.03 11.37-29.48-2.09L144 386.59l-10.61 31.88c-5.89 17.66-22.380 29.53-41 29.53H80c-8.84 0-16-7.16-16-16s7.16-16 16-16h12.39c4.83 0 9.11-3.08 10.64-7.66l18.19-54.64c3.3-9.81 12.44-16.41 22.78-16.41s19.48 6.59 22.77 16.41l13.88 41.64c19.75-16.19 54.06-9.7 66 14.16 1.89 3.78 5.49 5.95 9.36 6.26v-82.12l128-127.09V160H248c-13.2 0-24-10.8-24-24V0H24C10.7 0 0 10.7 0 24v464c0 13.3 10.7 24 24 24h336c13.3 0 24-10.7 24-24v-40l-128-.53c-24.17-.12-45.92-13.79-57.83-37.33zM384 121.9c0-6.3-2.5-12.4-7-16.9L279.1 7c-4.5-4.5-10.6-7-17-7H256v128h128v-6.1zm-96 225.06V416h68.99l161.68-162.78-67.88-67.88L288 346.96zm280.54-179.63l-31.87-31.87c-9.94-9.94-26.07-9.94-36.01 0l-27.25 27.25 67.88 67.88 27.25-27.25c9.95-9.94 9.95-26.07 0-36.01z" fill="#57923a"/></svg><div class="t" style="left:400.8px;top:719.34px;font-size:21px;line-height:21px;color:#1e2a52;font-weight:normal;transform:scaleY(1.07);transform-origin:0 17.78px;">18</div>
<div class="t" style="left:351.29999999999995px;width:600px;top:719.34px;font-size:21px;line-height:21px;color:#262626;font-weight:normal;text-align:center;transform:scaleY(1.07);transform-origin:0 17.78px;">10/05/2022</div>
<svg class="i" style="left:785px;top:718.75px;width:20.3px;height:21.4px" viewBox="0 0 448 512" preserveAspectRatio="none"><path d="M224 256c70.7 0 128-57.3 128-128S294.7 0 224 0 96 57.3 96 128s57.3 128 128 128zm89.6 32h-16.7c-22.2 10.2-46.9 16-72.9 16s-50.6-5.8-72.9-16h-16.7C60.2 288 0 348.2 0 422.4V464c0 26.5 21.5 48 48 48h352c26.5 0 48-21.5 48-48v-41.6c0-74.2-60.2-134.4-134.4-134.4z" fill="#8b6e45"/></svg><div class="t" style="left:814.5px;top:719.34px;font-size:21px;line-height:21px;color:#1e2a52;font-weight:normal;transform:scaleY(1.07);transform-origin:0 17.78px;">jacks SuperAdmin</div>
<div class="t" style="right:400.79999999999995px;top:719.34px;font-size:21px;line-height:21px;color:#23636b;font-weight:normal;text-align:right;transform:scaleY(1.07);transform-origin:0 17.78px;">500,00</div>
<div class="b" style="left:1647.8px;top:713.95px;width:102.2px;height:28.7px;border:2px solid #c9c9c9;border-radius:4.5px;background:#fff"></div><div class="t" style="left:1401.3px;width:600px;top:720.44px;font-size:19.7px;line-height:19.7px;color:#7b7b7b;font-weight:bold;text-align:center;transform:scaleY(1.07);transform-origin:0 16.68px;">Brouillon</div>
<svg class="i" style="left:1784.6px;top:718.25px;width:22.2px;height:22.5px" viewBox="0 0 22 22"><path d="M4.6 17.4 L15.9 6.1" stroke="#2f2f2f" stroke-width="5.6"/><path d="M6.58 19.38 L2.62 15.42 L0.6 21.4 Z" fill="#2f2f2f"/><path d="M17.0 5.0 L19.6 2.4" stroke="#2f2f2f" stroke-width="5.6"/><circle cx="19.4" cy="2.6" r="2.8" fill="#2f2f2f"/><path d="M5.4 18.1 L3.9 16.6 L2.9 19.1 Z" fill="#fff"/><path d="M5.6 14.6 L13.9 6.3" stroke="#fff" stroke-width="1.0"/></svg><svg class="i" style="left:1825.2px;top:718.25px;width:20.4px;height:22.5px" viewBox="0 0 448 512" preserveAspectRatio="none"><path d="M432 32H312l-9.4-18.7A24 24 0 0 0 281.1 0H166.8a23.720 23.720 0 0 0-21.4 13.3L136 32H16A16 16 0 0 0 0 48v16a16 16 0 0 0 16 16h416a16 16 0 0 0 16-16V48a16 16 0 0 0-16-16zM53.2 467a48 48 0 0 0 47.9 45h245.8a48 48 0 0 0 47.9-45L416 96H32z" fill="#666"/></svg><svg class="i" style="left:1863.2px;top:719.25px;width:19.5px;height:19.5px" viewBox="0 0 19.5 19.5"><rect x="0.85" y="0.85" width="17.8" height="17.8" rx="3.2" fill="#fff" stroke="#6a6a6a" stroke-width="1.7"/></svg><div class="b" style="left:360px;top:758.52px;width:1538px;height:55.27px;background:#ffffff;"></div><div class="b" style="left:360px;top:812.99px;width:1538px;height:1.6px;background:#e1e1e1"></div><svg class="i" style="left:371px;top:773.92px;width:24.6px;height:21.6px" viewBox="0 0 576 512" preserveAspectRatio="none"><path d="M218.17 424.14c-2.95-5.92-8.09-6.52-10.17-6.52s-7.22.59-10.020 6.19l-7.67 15.34c-6.37 12.78-25.03 11.37-29.48-2.09L144 386.59l-10.61 31.88c-5.89 17.66-22.380 29.53-41 29.53H80c-8.84 0-16-7.16-16-16s7.16-16 16-16h12.39c4.83 0 9.11-3.08 10.64-7.66l18.19-54.64c3.3-9.81 12.44-16.41 22.78-16.41s19.48 6.59 22.77 16.41l13.88 41.64c19.75-16.19 54.06-9.7 66 14.16 1.89 3.78 5.49 5.95 9.36 6.26v-82.12l128-127.09V160H248c-13.2 0-24-10.8-24-24V0H24C10.7 0 0 10.7 0 24v464c0 13.3 10.7 24 24 24h336c13.3 0 24-10.7 24-24v-40l-128-.53c-24.17-.12-45.92-13.79-57.83-37.33zM384 121.9c0-6.3-2.5-12.4-7-16.9L279.1 7c-4.5-4.5-10.6-7-17-7H256v128h128v-6.1zm-96 225.06V416h68.99l161.68-162.78-67.88-67.88L288 346.96zm280.54-179.63l-31.87-31.87c-9.94-9.94-26.07-9.94-36.01 0l-27.25 27.25 67.88 67.88 27.25-27.25c9.95-9.94 9.95-26.07 0-36.01z" fill="#57923a"/></svg><div class="t" style="left:400.8px;top:774.61px;font-size:21px;line-height:21px;color:#1e2a52;font-weight:normal;transform:scaleY(1.07);transform-origin:0 17.78px;">17</div>
<div class="t" style="left:351.29999999999995px;width:600px;top:774.61px;font-size:21px;line-height:21px;color:#262626;font-weight:normal;text-align:center;transform:scaleY(1.07);transform-origin:0 17.78px;">28/04/2022</div>
<svg class="i" style="left:785px;top:774.02px;width:20.3px;height:21.4px" viewBox="0 0 448 512" preserveAspectRatio="none"><path d="M224 256c70.7 0 128-57.3 128-128S294.7 0 224 0 96 57.3 96 128s57.3 128 128 128zm89.6 32h-16.7c-22.2 10.2-46.9 16-72.9 16s-50.6-5.8-72.9-16h-16.7C60.2 288 0 348.2 0 422.4V464c0 26.5 21.5 48 48 48h352c26.5 0 48-21.5 48-48v-41.6c0-74.2-60.2-134.4-134.4-134.4z" fill="#8b6e45"/></svg><div class="t" style="left:814.5px;top:774.61px;font-size:21px;line-height:21px;color:#1e2a52;font-weight:normal;transform:scaleY(1.07);transform-origin:0 17.78px;">Nan can</div>
<div class="t" style="right:400.79999999999995px;top:774.61px;font-size:21px;line-height:21px;color:#23636b;font-weight:normal;text-align:right;transform:scaleY(1.07);transform-origin:0 17.78px;">450,00</div>
<div class="b" style="left:1677.6px;top:769.22px;width:77.2px;height:32.5px;border-radius:4px;background:#c89e28"></div><div class="t" style="left:1416.2px;width:600px;top:775.29px;font-size:20.2px;line-height:20.2px;color:#fff;font-weight:bold;text-align:center;transform:scaleY(1.07);transform-origin:0 17.10px;">Validé</div>
<svg class="i" style="left:1784.6px;top:773.52px;width:22.2px;height:22.5px" viewBox="0 0 22 22"><path d="M4.6 17.4 L15.9 6.1" stroke="#2f2f2f" stroke-width="5.6"/><path d="M6.58 19.38 L2.62 15.42 L0.6 21.4 Z" fill="#2f2f2f"/><path d="M17.0 5.0 L19.6 2.4" stroke="#2f2f2f" stroke-width="5.6"/><circle cx="19.4" cy="2.6" r="2.8" fill="#2f2f2f"/><path d="M5.4 18.1 L3.9 16.6 L2.9 19.1 Z" fill="#fff"/><path d="M5.6 14.6 L13.9 6.3" stroke="#fff" stroke-width="1.0"/></svg><svg class="i" style="left:1825.2px;top:773.52px;width:20.4px;height:22.5px" viewBox="0 0 448 512" preserveAspectRatio="none"><path d="M432 32H312l-9.4-18.7A24 24 0 0 0 281.1 0H166.8a23.720 23.720 0 0 0-21.4 13.3L136 32H16A16 16 0 0 0 0 48v16a16 16 0 0 0 16 16h416a16 16 0 0 0 16-16V48a16 16 0 0 0-16-16zM53.2 467a48 48 0 0 0 47.9 45h245.8a48 48 0 0 0 47.9-45L416 96H32z" fill="#666"/></svg><svg class="i" style="left:1863.2px;top:774.52px;width:19.5px;height:19.5px" viewBox="0 0 19.5 19.5"><rect x="0.85" y="0.85" width="17.8" height="17.8" rx="3.2" fill="#fff" stroke="#6a6a6a" stroke-width="1.7"/></svg><div class="b" style="left:360px;top:813.79px;width:1538px;height:55.27px;background:#f9f9f9;"></div><div class="b" style="left:360px;top:868.26px;width:1538px;height:1.6px;background:#e1e1e1"></div><svg class="i" style="left:371px;top:829.1899999999999px;width:24.6px;height:21.6px" viewBox="0 0 576 512" preserveAspectRatio="none"><path d="M218.17 424.14c-2.95-5.92-8.09-6.52-10.17-6.52s-7.22.59-10.020 6.19l-7.67 15.34c-6.37 12.78-25.03 11.37-29.48-2.09L144 386.59l-10.61 31.88c-5.89 17.66-22.380 29.53-41 29.53H80c-8.84 0-16-7.16-16-16s7.16-16 16-16h12.39c4.83 0 9.11-3.08 10.64-7.66l18.19-54.64c3.3-9.81 12.44-16.41 22.78-16.41s19.48 6.59 22.77 16.41l13.88 41.64c19.75-16.19 54.06-9.7 66 14.16 1.89 3.78 5.49 5.95 9.36 6.26v-82.12l128-127.09V160H248c-13.2 0-24-10.8-24-24V0H24C10.7 0 0 10.7 0 24v464c0 13.3 10.7 24 24 24h336c13.3 0 24-10.7 24-24v-40l-128-.53c-24.17-.12-45.92-13.79-57.83-37.33zM384 121.9c0-6.3-2.5-12.4-7-16.9L279.1 7c-4.5-4.5-10.6-7-17-7H256v128h128v-6.1zm-96 225.06V416h68.99l161.68-162.78-67.88-67.88L288 346.96zm280.54-179.63l-31.87-31.87c-9.94-9.94-26.07-9.94-36.01 0l-27.25 27.25 67.88 67.88 27.25-27.25c9.95-9.94 9.95-26.07 0-36.01z" fill="#57923a"/></svg><div class="t" style="left:400.8px;top:829.88px;font-size:21px;line-height:21px;color:#1e2a52;font-weight:normal;transform:scaleY(1.07);transform-origin:0 17.78px;">16</div>
<div class="t" style="left:351.29999999999995px;width:600px;top:829.88px;font-size:21px;line-height:21px;color:#262626;font-weight:normal;text-align:center;transform:scaleY(1.07);transform-origin:0 17.78px;">28/04/2022</div>
<svg class="i" style="left:785px;top:829.29px;width:20.3px;height:21.4px" viewBox="0 0 448 512" preserveAspectRatio="none"><path d="M224 256c70.7 0 128-57.3 128-128S294.7 0 224 0 96 57.3 96 128s57.3 128 128 128zm89.6 32h-16.7c-22.2 10.2-46.9 16-72.9 16s-50.6-5.8-72.9-16h-16.7C60.2 288 0 348.2 0 422.4V464c0 26.5 21.5 48 48 48h352c26.5 0 48-21.5 48-48v-41.6c0-74.2-60.2-134.4-134.4-134.4z" fill="#8b6e45"/></svg><div class="t" style="left:814.5px;top:829.88px;font-size:21px;line-height:21px;color:#1e2a52;font-weight:normal;transform:scaleY(1.07);transform-origin:0 17.78px;">Mohamed</div>
<div class="t" style="right:400.79999999999995px;top:829.88px;font-size:21px;line-height:21px;color:#23636b;font-weight:normal;text-align:right;transform:scaleY(1.07);transform-origin:0 17.78px;">6 480,00</div>
<div class="b" style="left:1641px;top:824.49px;width:113.8px;height:32.5px;border-radius:4px;background:#27a47b"></div><div class="t" style="left:1397.9px;width:600px;top:831.56px;font-size:20.2px;line-height:20.2px;color:#fff;font-weight:bold;text-align:center;transform:scaleY(1.07);transform-origin:0 17.10px;">Approuvé</div>
<svg class="i" style="left:1784.6px;top:828.79px;width:22.2px;height:22.5px" viewBox="0 0 22 22"><path d="M4.6 17.4 L15.9 6.1" stroke="#2f2f2f" stroke-width="5.6"/><path d="M6.58 19.38 L2.62 15.42 L0.6 21.4 Z" fill="#2f2f2f"/><path d="M17.0 5.0 L19.6 2.4" stroke="#2f2f2f" stroke-width="5.6"/><circle cx="19.4" cy="2.6" r="2.8" fill="#2f2f2f"/><path d="M5.4 18.1 L3.9 16.6 L2.9 19.1 Z" fill="#fff"/><path d="M5.6 14.6 L13.9 6.3" stroke="#fff" stroke-width="1.0"/></svg><svg class="i" style="left:1825.2px;top:828.79px;width:20.4px;height:22.5px" viewBox="0 0 448 512" preserveAspectRatio="none"><path d="M432 32H312l-9.4-18.7A24 24 0 0 0 281.1 0H166.8a23.720 23.720 0 0 0-21.4 13.3L136 32H16A16 16 0 0 0 0 48v16a16 16 0 0 0 16 16h416a16 16 0 0 0 16-16V48a16 16 0 0 0-16-16zM53.2 467a48 48 0 0 0 47.9 45h245.8a48 48 0 0 0 47.9-45L416 96H32z" fill="#666"/></svg><svg class="i" style="left:1863.2px;top:829.79px;width:19.5px;height:19.5px" viewBox="0 0 19.5 19.5"><rect x="0.85" y="0.85" width="17.8" height="17.8" rx="3.2" fill="#fff" stroke="#6a6a6a" stroke-width="1.7"/></svg><div class="b" style="left:360px;top:869.06px;width:1538px;height:55.27px;background:#ffffff;"></div><div class="b" style="left:360px;top:923.53px;width:1538px;height:1.6px;background:#e1e1e1"></div><svg class="i" style="left:371px;top:884.4599999999999px;width:24.6px;height:21.6px" viewBox="0 0 576 512" preserveAspectRatio="none"><path d="M218.17 424.14c-2.95-5.92-8.09-6.52-10.17-6.52s-7.22.59-10.020 6.19l-7.67 15.34c-6.37 12.78-25.03 11.37-29.48-2.09L144 386.59l-10.61 31.88c-5.89 17.66-22.380 29.53-41 29.53H80c-8.84 0-16-7.16-16-16s7.16-16 16-16h12.39c4.83 0 9.11-3.08 10.64-7.66l18.19-54.64c3.3-9.81 12.44-16.41 22.78-16.41s19.48 6.59 22.77 16.41l13.88 41.64c19.75-16.19 54.06-9.7 66 14.16 1.89 3.78 5.49 5.95 9.36 6.26v-82.12l128-127.09V160H248c-13.2 0-24-10.8-24-24V0H24C10.7 0 0 10.7 0 24v464c0 13.3 10.7 24 24 24h336c13.3 0 24-10.7 24-24v-40l-128-.53c-24.17-.12-45.92-13.79-57.83-37.33zM384 121.9c0-6.3-2.5-12.4-7-16.9L279.1 7c-4.5-4.5-10.6-7-17-7H256v128h128v-6.1zm-96 225.06V416h68.99l161.68-162.78-67.88-67.88L288 346.96zm280.54-179.63l-31.87-31.87c-9.94-9.94-26.07-9.94-36.01 0l-27.25 27.25 67.88 67.88 27.25-27.25c9.95-9.94 9.95-26.07 0-36.01z" fill="#57923a"/></svg><div class="t" style="left:400.8px;top:885.15px;font-size:21px;line-height:21px;color:#1e2a52;font-weight:normal;transform:scaleY(1.07);transform-origin:0 17.78px;">15</div>
<div class="t" style="left:351.29999999999995px;width:600px;top:885.15px;font-size:21px;line-height:21px;color:#262626;font-weight:normal;text-align:center;transform:scaleY(1.07);transform-origin:0 17.78px;">28/04/2022</div>
<svg class="i" style="left:785px;top:884.56px;width:20.3px;height:21.4px" viewBox="0 0 448 512" preserveAspectRatio="none"><path d="M224 256c70.7 0 128-57.3 128-128S294.7 0 224 0 96 57.3 96 128s57.3 128 128 128zm89.6 32h-16.7c-22.2 10.2-46.9 16-72.9 16s-50.6-5.8-72.9-16h-16.7C60.2 288 0 348.2 0 422.4V464c0 26.5 21.5 48 48 48h352c26.5 0 48-21.5 48-48v-41.6c0-74.2-60.2-134.4-134.4-134.4z" fill="#8b6e45"/></svg><div class="t" style="left:814.5px;top:885.15px;font-size:21px;line-height:21px;color:#1e2a52;font-weight:normal;transform:scaleY(1.07);transform-origin:0 17.78px;">Ahmed</div>
<div class="t" style="right:400.79999999999995px;top:885.15px;font-size:21px;line-height:21px;color:#23636b;font-weight:normal;text-align:right;transform:scaleY(1.07);transform-origin:0 17.78px;">5 870,00</div>
<div class="b" style="left:1647.8px;top:879.76px;width:102.2px;height:28.7px;border:2px solid #c9c9c9;border-radius:4.5px;background:#fff"></div><div class="t" style="left:1401.3px;width:600px;top:886.25px;font-size:19.7px;line-height:19.7px;color:#7b7b7b;font-weight:bold;text-align:center;transform:scaleY(1.07);transform-origin:0 16.68px;">Brouillon</div>
<svg class="i" style="left:1784.6px;top:884.06px;width:22.2px;height:22.5px" viewBox="0 0 22 22"><path d="M4.6 17.4 L15.9 6.1" stroke="#2f2f2f" stroke-width="5.6"/><path d="M6.58 19.38 L2.62 15.42 L0.6 21.4 Z" fill="#2f2f2f"/><path d="M17.0 5.0 L19.6 2.4" stroke="#2f2f2f" stroke-width="5.6"/><circle cx="19.4" cy="2.6" r="2.8" fill="#2f2f2f"/><path d="M5.4 18.1 L3.9 16.6 L2.9 19.1 Z" fill="#fff"/><path d="M5.6 14.6 L13.9 6.3" stroke="#fff" stroke-width="1.0"/></svg><svg class="i" style="left:1825.2px;top:884.06px;width:20.4px;height:22.5px" viewBox="0 0 448 512" preserveAspectRatio="none"><path d="M432 32H312l-9.4-18.7A24 24 0 0 0 281.1 0H166.8a23.720 23.720 0 0 0-21.4 13.3L136 32H16A16 16 0 0 0 0 48v16a16 16 0 0 0 16 16h416a16 16 0 0 0 16-16V48a16 16 0 0 0-16-16zM53.2 467a48 48 0 0 0 47.9 45h245.8a48 48 0 0 0 47.9-45L416 96H32z" fill="#666"/></svg><svg class="i" style="left:1863.2px;top:885.06px;width:19.5px;height:19.5px" viewBox="0 0 19.5 19.5"><rect x="0.85" y="0.85" width="17.8" height="17.8" rx="3.2" fill="#fff" stroke="#6a6a6a" stroke-width="1.7"/></svg><div class="t" style="left:372.3px;top:940.42px;font-size:21px;line-height:21px;color:#8a8a8a;font-weight:normal;transform:scaleY(1.07);transform-origin:0 17.78px;">Total</div>
<div class="t" style="right:400.79999999999995px;top:940.42px;font-size:21px;line-height:21px;color:#8a8a8a;font-weight:normal;text-align:right;transform:scaleY(1.07);transform-origin:0 17.78px;">41 347,00</div>

</body></html>
